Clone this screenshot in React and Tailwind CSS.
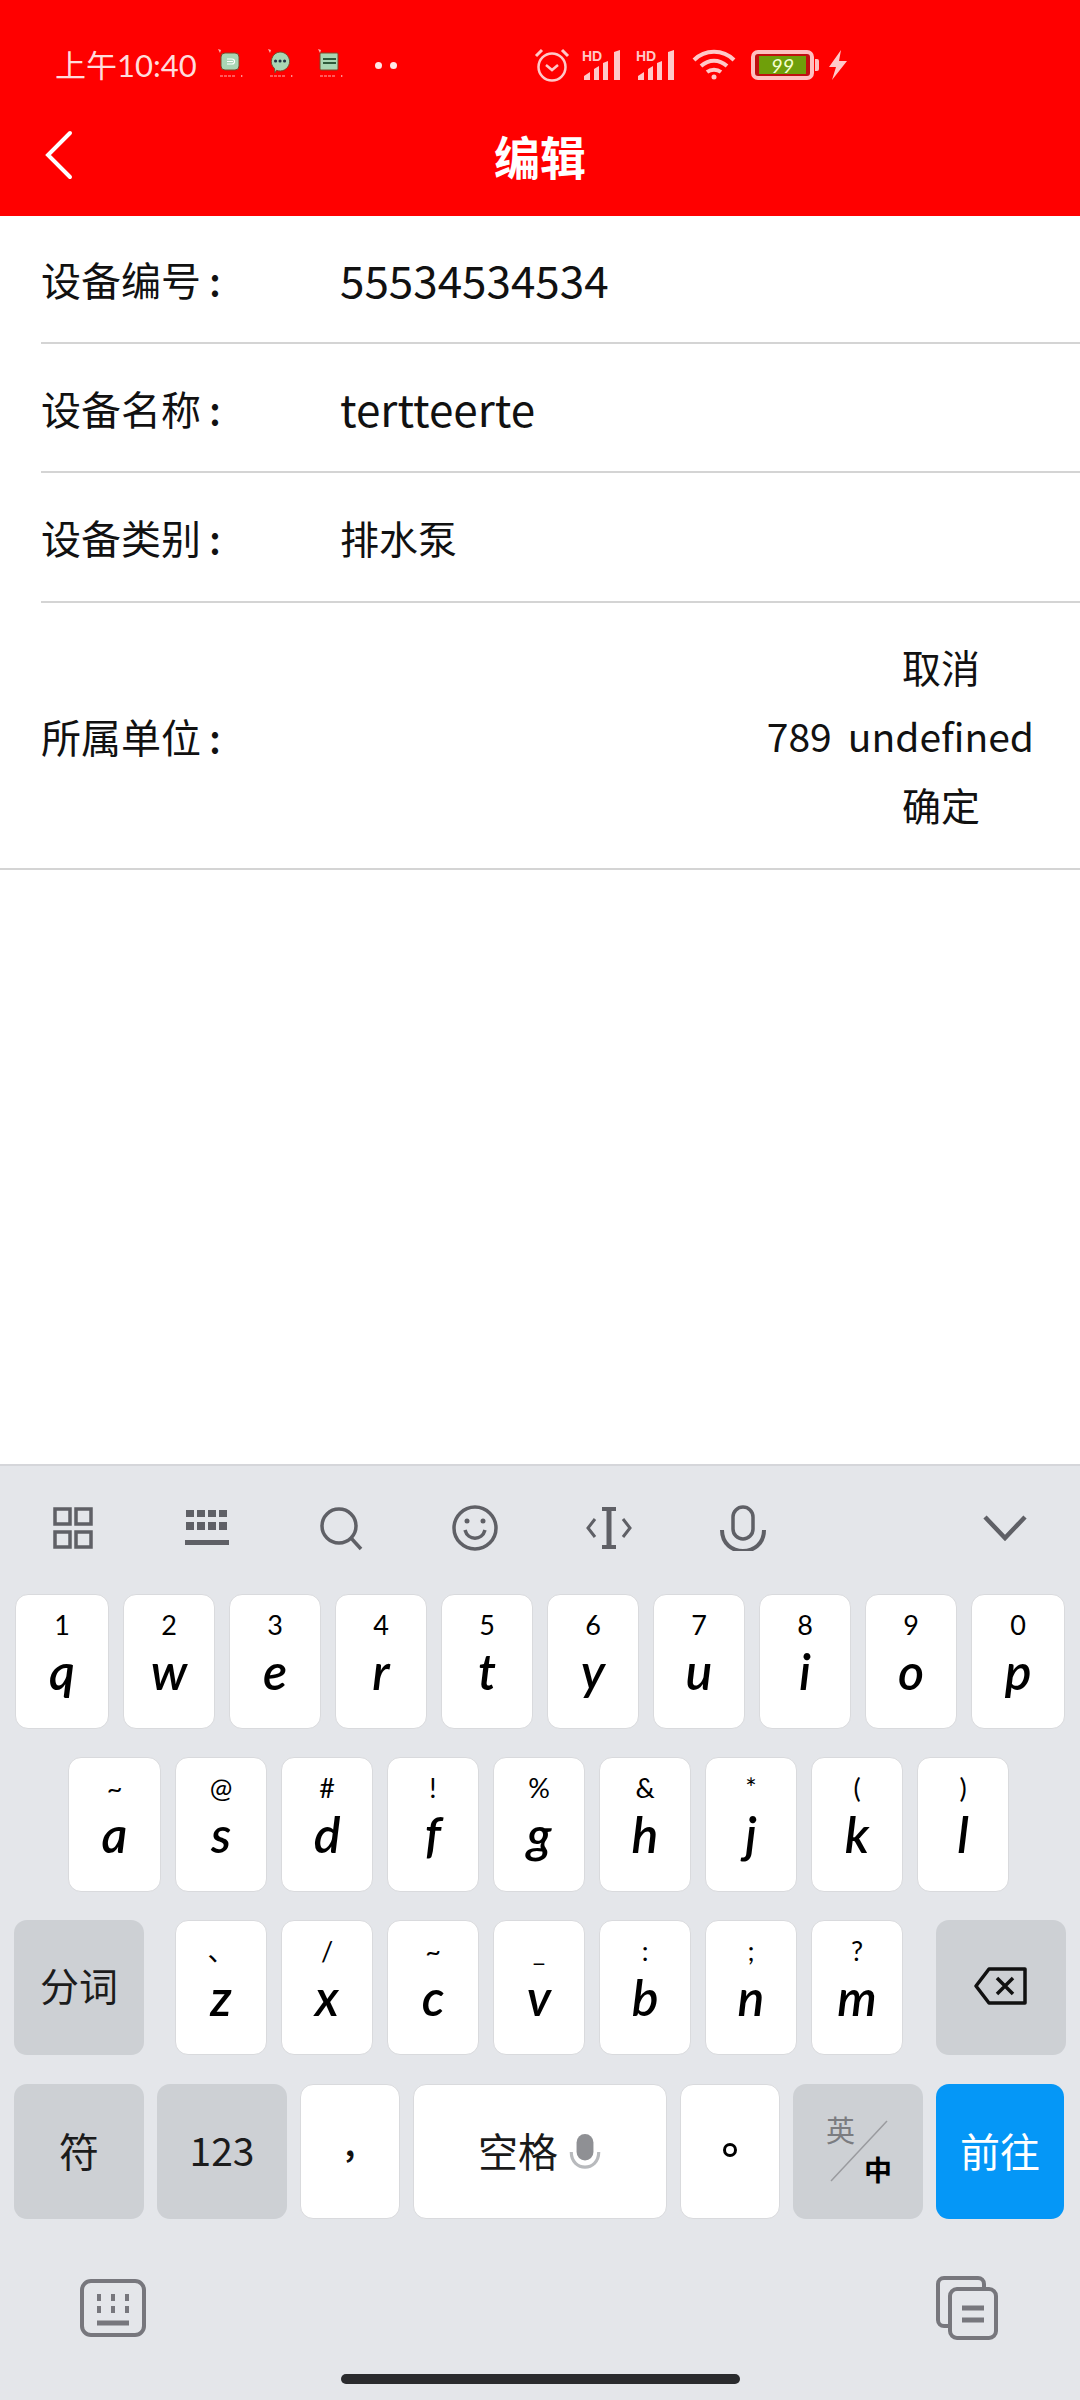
const CJK = "font-['Noto_Sans_CJK_SC','Noto_Sans',sans-serif]";
const HAND = "font-['Lato','Noto_Sans_CJK_SC',sans-serif]";

function NoteIcon({ kind }) {
  return (
    <svg width="28" height="32" viewBox="0 0 28 32" className="shrink-0">
      <path d="M0 0l3 1-1 3z" fill="#ffb0b0" />
      {kind === 'bubble' ? (
        <path d="M12 3a9.500 9.500 0 1 1-3.500 18.300L7 24l-.5-4.500A9.500 9.500 0 0 1 12 3z" fill="#a9d6b4" stroke="#7a4a2a" />
      ) : (
        <rect x={kind === 'chip' ? 2 : 3} y="4" width="18" height="17" rx={kind === 'chip' ? 1 : 4} fill="#a9d6b4" stroke="#7a4a2a" />
      )}
      {kind === 'doc' && <path d="M9 10h5a2 2 0 0 1 0 5H9m0-2.500h6" fill="none" stroke="#fff" strokeWidth="1.200" />}
      {kind === 'bubble' && <path d="M7.500 12h.1M12 12h.1M16.500 12h.1" stroke="#234" strokeWidth="3" strokeLinecap="round" />}
      {kind === 'chip' && <path d="M5 10h13M5 14h13" stroke="#2f5a3c" strokeWidth="2" />}
      <path d="M2 27h16" stroke="#ffb0b0" strokeWidth="1.200" strokeDasharray="3 1" />
      <path d="M23 26l2 1-2 1z" fill="#ffc0c0" />
    </svg>
  );
}

function Signal() {
  return (
    <svg width="42" height="32" viewBox="0 0 42 32" className="shrink-0">
      <text x="0" y="12" fontSize="14" fontWeight="700" fontFamily="Liberation Sans" fill="#ffc8c8">HD</text>
      <path d="M2 31v-4l6-4v8zM12 31V20l5-3v14zM21 31V14l5-2v19zM32 31V3l6-2v30z" fill="#ffc8c8" />
    </svg>
  );
}

function StatusBar() {
  return (
    <div className="flex h-[36px] items-center pl-[55px]">
      <span className={`${HAND} w-[163px] text-[31px] leading-none text-[#ffdcdc]`}>
        上午10:40
      </span>
      <div className="flex w-[150px] gap-[22px]">
        <NoteIcon kind="doc" />
        <NoteIcon kind="bubble" />
        <NoteIcon kind="chip" />
      </div>
      <div className="ml-[7px] flex w-[159px] gap-[8px]">
        <span className="size-[7px] rounded-full bg-[#ffe6e6]" />
        <span className="size-[7px] rounded-full bg-[#ffe6e6]" />
      </div>
      <svg width="36" height="36" viewBox="0 0 36 36" fill="none" stroke="#ffc8c8" strokeWidth="2.500" className="shrink-0">
        <circle cx="18" cy="20" r="13.500" />
        <path d="M12 18l6 5 6-5" />
        <path d="M2 9l6-6M34 9l-6-6" strokeWidth="3" />
      </svg>
      <div className="ml-[12px] flex gap-[12px]">
        <Signal />
        <Signal />
      </div>
      <svg width="44" height="32" viewBox="0 0 44 32" fill="none" stroke="#ffc8c8" strokeWidth="4" className="ml-[14px] shrink-0">
        <path d="M2 11C13 0 31 0 42 11" />
        <path d="M9 17c8-7 18-7 26 0" />
        <path d="M15 23c4-3 10-3 14 0" />
        <circle cx="22" cy="28" r="2.500" fill="#ffc8c8" stroke="none" />
      </svg>
      <div className="relative ml-[15px] flex h-[30px] w-[63px] items-center justify-center rounded-[7px] border-[4px] border-[#ffc0c0] bg-[#c01010]">
        <div className="flex h-[18px] w-[47px] items-center justify-center bg-[#6f9f0a] text-[20px] leading-none text-[#f5ffd0] italic font-['Lato',sans-serif]">
          99
        </div>
      </div>
      <div className="ml-[1px] h-[12px] w-[4px] rounded-r-[2px] bg-[#ffc0c0]" />
      <svg width="20" height="30" viewBox="0 0 20 30" fill="#ffc8c8" className="ml-[8px] shrink-0">
        <path d="M14 0L2 17h7L5 30l15-19h-8z" />
      </svg>
    </div>
  );
}

function Row({ label, children, h = 'h-[129px]', full }) {
  return (
    <div className={`flex shrink-0 items-center ${h} ${full ? 'ml-0 pl-[41px]' : 'ml-[41px]'} border-b-2 border-[#d4d4d4] text-[40px] leading-none text-[#111]`}>
      <span className="w-[299px] shrink-0">{label}<span className="ml-[8px] font-medium">:</span></span>
      {children}
    </div>
  );
}

function Key({ top, letter, className = 'w-[92px]' }) {
  return (
    <div className={`flex h-[135px] shrink-0 flex-col items-center rounded-[13px] border border-[#d9dadd] bg-white text-black ${HAND} ${className}`}>
      <span className="mt-[13px] flex h-[32px] items-center text-[27px] leading-none">{top}</span>
      <span className="mt-[8px] flex h-[46px] items-center text-[50px] leading-none font-semibold italic">{letter}</span>
    </div>
  );
}

function FnKey({ children, className = '' }) {
  return (
    <div className={`relative flex h-[135px] shrink-0 items-center justify-center rounded-[13px] text-[39px] leading-none ${className}`}>
      {children}
    </div>
  );
}

const ICON = '#5f6066';

function Toolbar() {
  return (
    <div className="flex h-[128px] items-center pr-[52px] pb-[4px] pl-[50px]">
      <div className="flex gap-[88px]">
        <svg width="46" height="46" viewBox="0 0 46 46" fill="none" stroke={ICON} strokeWidth="3.500" className="shrink-0">
          <rect x="5" y="4" width="15" height="15" /><rect x="26" y="4" width="15" height="15" />
          <rect x="5" y="27" width="15" height="15" /><rect x="26" y="27" width="15" height="15" />
        </svg>
        <svg width="46" height="46" viewBox="0 0 46 46" className="shrink-0" fill={ICON}>
          <path d="M2 5h8v7H2zM13 5h8v7h-8zM24 5h8v7h-8zM35 5h8v7h-8zM2 17h8v8H2zM13 17h8v8h-8zM24 17h8v8h-8zM35 17h8v8h-8zM1 35h44v5H1z" />
        </svg>
        <svg width="46" height="46" viewBox="0 0 46 46" fill="none" stroke={ICON} strokeWidth="3.500" className="shrink-0">
          <circle cx="21" cy="21" r="17" /><path d="M33 33l10 11" />
        </svg>
        <svg width="46" height="46" viewBox="0 0 46 46" fill="none" stroke={ICON} strokeWidth="3.500" className="shrink-0">
          <circle cx="23" cy="23" r="21" />
          <path d="M13 25c3 11 17 11 20 0" />
          <circle cx="15" cy="16" r="2.500" fill={ICON} stroke="none" /><circle cx="31" cy="16" r="2.500" fill={ICON} stroke="none" />
        </svg>
        <svg width="46" height="46" viewBox="0 0 46 46" fill="none" stroke={ICON} strokeWidth="3" className="shrink-0">
          <path d="M9 14l-7 9 7 9M37 14l7 9-7 9" /><path d="M23 5v36" strokeWidth="5" /><path d="M16 4h14M16 42h14" strokeWidth="4" />
        </svg>
        <svg width="46" height="46" viewBox="0 0 46 46" fill="none" stroke={ICON} strokeWidth="3.500" className="shrink-0">
          <rect x="13" y="2" width="20" height="32" rx="10" />
          <path d="M2 25c0 28 42 28 42 0" strokeWidth="4" />
        </svg>
      </div>
      <svg width="46" height="46" viewBox="0 0 46 46" fill="none" stroke={ICON} strokeWidth="4.500" className="ml-auto shrink-0">
        <path d="M3 12l20 21 20-21" />
      </svg>
    </div>
  );
}

const R1 = [['1','q'],['2','w'],['3','e'],['4','r'],['5','t'],['6','y'],['7','u'],['8','i'],['9','o'],['0','p']];
const R2 = [['~','a'],['@','s'],['#','d'],['!','f'],['%','g'],['&','h'],['*','j'],['(','k'],[')','l']];
const R3 = [['、','z'],['/','x'],['~','c'],['_','v'],[':','b'],[';','n'],['?','m']];

function Keyboard() {
  return (
    <div className={`flex flex-1 flex-col border-t-2 border-[#d5d6da] bg-[#e4e6ea] ${CJK}`}>
      <Toolbar />
      <div className="flex gap-[14px] pl-[15px]">
        {R1.map(([t, l]) => <Key key={l} top={t} letter={l} className={l === 'q' || l === 'p' ? 'w-[94px]' : 'w-[92px]'} />)}
      </div>
      <div className="mt-[28px] flex gap-[14px] pl-[68px]">
        {R2.map(([t, l]) => <Key key={l} top={t} letter={l} className={l === 'a' ? 'w-[93px]' : 'w-[92px]'} />)}
      </div>
      <div className="mt-[28px] flex pl-[14px]">
        <FnKey className="mr-[31px] w-[130px] bg-[#cdd0d4] text-[#1c1c1c]"><span className="pb-[6px]">分词</span></FnKey>
        <div className="flex gap-[14px]">
          {R3.map(([t, l]) => <Key key={l} top={t} letter={l} />)}
        </div>
        <FnKey className="ml-[33px] w-[130px] bg-[#cdd0d4]">
          <svg width="56" height="40" viewBox="0 0 56 40" fill="none" stroke="#111" strokeWidth="3.500" className="mb-[4px]">
            <path d="M16 3h36v34H16L3 20z" strokeLinejoin="round" />
            <path d="M24 12l16 16M40 12L24 28" />
          </svg>
        </FnKey>
      </div>
      <div className="mt-[29px] flex gap-[13px] pl-[14px]">
        <FnKey className="w-[130px] bg-[#cdd0d4] text-[#1c1c1c]"><span className="pb-[4px] text-[40px]">符</span></FnKey>
        <FnKey className="w-[130px] bg-[#cdd0d4] text-[#1c1c1c]"><span className="pb-[4px]">123</span></FnKey>
        <FnKey className="w-[100px] border border-[#d9dadd] bg-white text-[#111]"><span className="pb-[20px] text-[32px] font-bold">,</span></FnKey>
        <FnKey className="w-[254px] gap-[10px] border border-[#d9dadd] bg-white text-[#1a1a1a]">
          <span className="pb-[4px] text-[40px]">空格</span>
          <svg width="34" height="38" viewBox="0 0 32 36" className="shrink-0">
            <rect x="8" y="1" width="16" height="25" rx="8" fill="#8f9094" />
            <path d="M3 18c0 19 26 19 26 0" fill="none" stroke="#b8babd" strokeWidth="3" />
          </svg>
        </FnKey>
        <FnKey className="w-[100px] border border-[#d9dadd] bg-white text-[#111]">
          <span className="mb-[3px] size-[14px] rounded-full border-[3px] border-black" />
        </FnKey>
        <FnKey className="w-[130px] bg-[#cdd0d4]">
          <span className="absolute top-[31px] left-[33px] text-[29px] text-[#7b7c80]">英</span>
          <span className="absolute top-[71px] left-[71px] text-[28px] font-semibold text-black">中</span>
          <svg width="60" height="62" viewBox="0 0 60 62" className="absolute top-[36px] left-[36px]">
            <path d="M58 1L2 61" stroke="#9a9b9f" strokeWidth="1.500" />
          </svg>
        </FnKey>
        <FnKey className="w-[128px] bg-[#0597f7] text-white"><span className="pb-[4px] text-[40px]">前往</span></FnKey>
      </div>
      <div className="mt-[57px] flex items-center pr-[82px] pl-[80px]">
        <svg width="66" height="58" viewBox="0 0 66 58" fill="none" stroke="#77777d" className="shrink-0">
          <rect x="2" y="2" width="62" height="54" rx="9" strokeWidth="4" />
          <path d="M17 15h4v7h-4zM31 15h4v7h-4zM45 15h4v7h-4zM17 27h4v7h-4zM31 27h4v7h-4zM45 27h4v7h-4z" fill="#77777d" stroke="none" />
          <path d="M17 44h32" strokeWidth="5" />
        </svg>
        <svg width="62" height="64" viewBox="0 0 62 64" fill="none" stroke="#77777d" strokeWidth="4" className="ml-auto shrink-0">
          <path d="M12 50H8a6 6 0 0 1-6-6V8a6 6 0 0 1 6-6h34a6 6 0 0 1 6 6v4" />
          <rect x="14" y="13" width="46" height="49" rx="7" fill="#e4e6ea" />
          <path d="M26 32h22M26 44h22" strokeWidth="5" />
        </svg>
      </div>
      <div className="mx-auto mt-[34px] h-[10px] w-[399px] rounded-full bg-[#2a2b2e]" />
    </div>
  );
}

export default function App() {
  return (
    <div className={`flex h-[2400px] w-[1080px] flex-col overflow-hidden bg-white ${CJK}`}>
      <header className="h-[216px] shrink-0 bg-[#ff0000] pt-[47px]">
        <StatusBar />
        <div className="mt-[47px] grid grid-cols-3 items-center px-[44px]">
          <svg width="30" height="50" viewBox="0 0 30 50" fill="none" stroke="#fff" strokeWidth="4" strokeLinecap="round" className="shrink-0">
            <path d="M26 3L4 25l22 22" />
          </svg>
          <h1 className="text-center text-[46px] leading-none font-bold text-white">编辑</h1>
        </div>
      </header>
      <Row label="设备编号" h="h-[128px]"><span className="text-[44px]">55534534534</span></Row>
      <Row label="设备名称"><span className="text-[44px]">tertteerte</span></Row>
      <Row label="设备类别" h="h-[130px]"><span className="text-[39px]">排水泵</span></Row>
      <Row label="所属单位" h="h-[267px]" full>
        <div className="mr-[46px] ml-auto flex items-center gap-[16px] text-[39px]">
          <span>789</span>
          <div className="flex flex-col items-center gap-[30px]">
            <span>取消</span>
            <span>undefined</span>
            <span>确定</span>
          </div>
        </div>
      </Row>
      <div className="flex-1" />
      <div className="flex h-[936px] shrink-0"><Keyboard /></div>
    </div>
  );
}
